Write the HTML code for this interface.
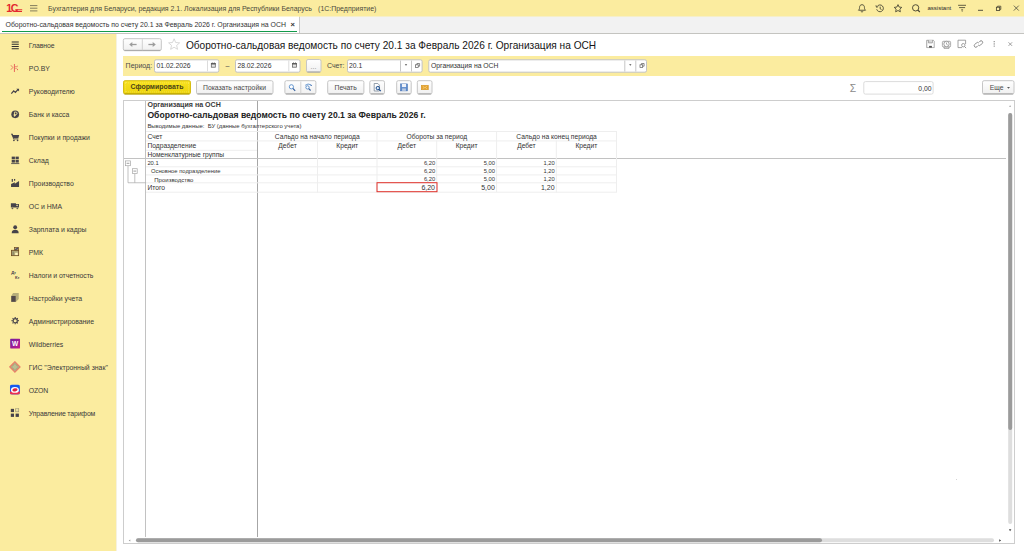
<!DOCTYPE html>
<html lang="ru">
<head>
<meta charset="utf-8">
<title>Оборотно-сальдовая ведомость</title>
<style>
html,body{margin:0;padding:0;}
body{width:1024px;height:551px;position:relative;overflow:hidden;background:#fff;font-family:"Liberation Sans",sans-serif;color:#333;-webkit-font-smoothing:antialiased;}
.abs{position:absolute;}
.t{position:absolute;white-space:pre;line-height:1;}
#titlebar{left:0;top:0;width:1024px;height:16.5px;background:#fbec9f;}
#tabbar{left:0;top:16.5px;width:1024px;height:16.5px;background:#f2f2f2;}
#tab{left:0;top:16.5px;width:299px;height:16.5px;background:#fff;border-right:1px solid #c8c8c8;}
#tabline{left:1.5px;top:30.7px;width:295.6px;height:1.2px;background:#129a4a;}
#tabsep{left:0;top:33px;width:1024px;height:1px;background:#c4c4c0;}
#sidebar{left:0;top:34px;width:116px;height:517px;background:#fbec9f;}
#gap{left:116px;top:34px;width:1px;height:517px;background:#f6f2e0;}
.sb{position:absolute;left:28.8px;font-size:6.9px;line-height:8px;color:#3a3a3a;white-space:pre;}
.ic{position:absolute;}
.btn{position:absolute;box-sizing:border-box;border:1px solid #c3c3c3;border-bottom-color:#a9a9a9;border-radius:2px;background:linear-gradient(#ffffff,#f1f1f1);box-shadow:0 1px 0 rgba(0,0,0,.10);}
.inp{position:absolute;box-sizing:border-box;border:1px solid #c2c2c2;border-radius:2px;background:#fff;}
.lbl{position:absolute;font-size:7px;line-height:8px;color:#4a4a4a;white-space:pre;}
.v{position:absolute;font-size:6.8px;line-height:8px;color:#333;white-space:pre;}
.hl{position:absolute;height:0;border-top:1px solid #eeeeee;}
.vl{position:absolute;width:0;border-left:1px solid #eeeeee;}
.c{position:absolute;font-size:7.6px;line-height:9px;color:#3c3c3c;white-space:pre;}
.num{position:absolute;text-align:right;white-space:pre;color:#333;}
</style>
</head>
<body>
<!-- title bar -->
<div id="titlebar" class="abs"></div>
<div id="tabbar" class="abs"></div>
<div id="tab" class="abs"></div>
<div id="tabline" class="abs"></div>
<div class="abs" style="left:0;top:16px;width:299px;height:1px;background:#fdf5cf;"></div>
<div class="abs" style="left:300px;top:16px;width:724px;height:1px;background:#f6efc9;"></div>
<div id="tabsep" class="abs"></div>
<div id="sidebar" class="abs"></div>
<div id="gap" class="abs"></div>

<div class="t" style="left:48px;top:5.6px;font-size:6.96px;color:#4a4a3c;">Бухгалтерия для Беларуси, редакция 2.1. Локализация для Республики Беларусь   <span style="margin-left:0.5px">(1С:Предприятие)</span></div>
<div class="t" style="left:5.5px;top:22px;font-size:6.93px;color:#333;">Оборотно-сальдовая ведомость по счету 20.1 за Февраль 2026 г. Организация на ОСН</div>
<div class="t" style="left:290.5px;top:21px;font-size:7.5px;color:#333;font-weight:bold;">×</div>
<div class="t" style="left:927.5px;top:5px;font-size:6px;color:#2b2b2b;">assistant</div>

<!-- MAIN -->
<svg class="abs" style="left:0;top:0" width="0" height="0"><defs><linearGradient id="gb" x1="0" y1="0" x2="0" y2="1"><stop offset="0" stop-color="#ffffff"/><stop offset="1" stop-color="#f0f0f0"/></linearGradient><linearGradient id="gy" x1="0" y1="0" x2="0" y2="1"><stop offset="0" stop-color="#f9e21f"/><stop offset="1" stop-color="#ecd30c"/></linearGradient></defs></svg>
<!-- title bar icons -->
<div class="t" style="left:6.2px;top:2.7px;font-size:10.6px;font-weight:bold;color:#e3282f;letter-spacing:-1.4px;">1С</div>
<div class="abs" style="left:15px;top:9px;width:7px;height:0.9px;background:#e3282f;transform:translate(0.2px,0.3px);"></div>
<div class="abs" style="left:14px;top:11px;width:8.3px;height:0.9px;background:#e3282f;"></div>
<svg class="ic" style="left:29px;top:3px" width="10" height="10" viewBox="0 0 10 10"><path d="M1 2.6h7.4M1 5.2h7.4M1 7.9h7.4" stroke="#5c5a48" stroke-width="0.75" fill="none"/></svg>
<!-- bell -->
<svg class="ic" style="left:856px;top:2px" width="12" height="12" viewBox="0 0 12 12"><g transform="translate(6 6.4) scale(0.84) translate(-6 -6)"><path d="M6 1.6c-2 0-2.9 1.5-2.9 3.2c0 2-0.6 2.7-1.3 3.4h8.4c-0.7-0.7-1.3-1.4-1.3-3.4c0-1.700-0.900-3.200-2.900-3.200z" fill="none" stroke="#474432" stroke-width="1.05"/><path d="M5 9.4a1 1 0 0 0 2 0" fill="none" stroke="#474432" stroke-width="1.05"/></g></svg>
<!-- history -->
<svg class="ic" style="left:874px;top:2px" width="12" height="12" viewBox="0 0 12 12"><g transform="translate(6 6.5) scale(0.85) translate(-6 -6)"><path d="M2.600 3.600a4 4 0 1 1-0.500 3.300" fill="none" stroke="#474432" stroke-width="1.05"/><path d="M1.300 2.300l0.500 2.200l2.100-0.600" fill="none" stroke="#474432" stroke-width="1.05"/><path d="M6.200 3.800v2.500l1.600 1" fill="none" stroke="#474432" stroke-width="1.05"/></g></svg>
<!-- star -->
<svg class="ic" style="left:892px;top:2px" width="12" height="12" viewBox="0 0 12 12"><g transform="translate(6 6.4) scale(0.84) translate(-6 -6)"><path d="M6 1.500l1.350 2.900l3.150 0.400l-2.300 2.150l0.600 3.100l-2.800-1.550l-2.800 1.550l0.600-3.100l-2.300-2.150l3.150-0.400z" fill="none" stroke="#474432" stroke-width="1.05" stroke-linejoin="round"/></g></svg>
<!-- search -->
<svg class="ic" style="left:910px;top:2px" width="12" height="12" viewBox="0 0 12 12"><g transform="translate(6 6.2) scale(0.9) translate(-6 -6)"><circle cx="5.600" cy="5.600" r="3.500" fill="none" stroke="#474432" stroke-width="1.05"/><path d="M8.200 8.200l2 2" stroke="#474432" stroke-width="1.3"/></g></svg>
<!-- filter menu -->
<svg class="ic" style="left:956px;top:2px" width="12" height="12" viewBox="0 0 12 12"><path d="M2.100 3.300h7.900M3.100 5.600h6" stroke="#474432" stroke-width="0.85"/><path d="M5.200 7.800h1.900" stroke="#474432" stroke-width="0.8"/><path d="M5.300 8.800h1.700l-0.850 1z" fill="#474432"/></svg>
<!-- min / restore / close -->
<div class="abs" style="left:978px;top:9px;width:5px;height:0.8px;background:#55523f;transform:translate(0px,0.8px);"></div>
<svg class="ic" style="left:992px;top:2px" width="12" height="12" viewBox="0 0 12 12"><rect x="4.400" y="5.200" width="3.300" height="3.300" fill="none" stroke="#474432" stroke-width="0.85"/><path d="M5.600 5.200v-1h3.200v3.200h-1.100" fill="none" stroke="#474432" stroke-width="0.8"/></svg>
<svg class="ic" style="left:1010px;top:2px" width="12" height="12" viewBox="0 0 12 12"><path d="M3.800 3.600l5 5M8.800 3.600l-5 5" stroke="#4a4a40" stroke-width="0.8"/></svg>
<svg class="ic" style="overflow:visible;left:10px;top:40px;transform:translate(0.6px,0.7px);" width="9.2" height="9.2" viewBox="0 0 10 10"><path d="M1.2 1.400h7.700M1.200 3.850h7.700M1.200 6.300h7.700M1.200 8.750h7.700" stroke="#2e2c30" stroke-width="1.150" fill="none"/></svg>
<div class="sb" style="top:42.3px;letter-spacing:-0.07px">Главное</div>
<svg class="ic" style="overflow:visible;left:10px;top:63px;transform:translate(0.6px,0.7px);" width="9.2" height="9.2" viewBox="0 0 10 10"><path d="M4.150 0.300v8.700" stroke="#e2404a" stroke-width="0.850" fill="none"/><path d="M0.400 1.700l2 2.400l-2 2.400" stroke="#e4574f" stroke-width="0.800" fill="none"/><path d="M4.300 3.100h3.500M4.300 5h2.800" stroke="#e66a5c" stroke-width="0.700" fill="none"/><path d="M7.900 1.900l-1.700 1.300" stroke="#ee9a7a" stroke-width="0.600" fill="none"/><circle cx="7.500" cy="6.400" r="0.600" fill="#e2404a"/></svg>
<div class="sb" style="top:65.3px">PO.BY</div>
<svg class="ic" style="overflow:visible;left:10px;top:86px;transform:translate(0.6px,0.7px);" width="9.2" height="9.2" viewBox="0 0 10 10"><path d="M0.8 7.6l2.6-3l1.8 1.6l3-3.2" stroke="#46434a" stroke-width="1.3" fill="none"/><path d="M6.2 2.2h3v3z" fill="#46434a"/></svg>
<div class="sb" style="top:88.3px">Руководителю</div>
<svg class="ic" style="overflow:visible;left:10px;top:109px;transform:translate(0.6px,0.7px);" width="9.2" height="9.2" viewBox="0 0 10 10"><circle cx="5" cy="5" r="4.2" fill="#46434a"/><path d="M4.2 7.6v-5h1.5a1.3 1.3 0 0 1 0 2.7h-2.3M3.4 6.4h2.4" stroke="#fbec9f" stroke-width="0.9" fill="none"/></svg>
<div class="sb" style="top:111.3px">Банк и касса</div>
<svg class="ic" style="overflow:visible;left:10px;top:132px;transform:translate(0.6px,0.7px);" width="9.2" height="9.2" viewBox="0 0 10 10"><path d="M0.3 1.2h1.6l0.5 1.2h7l-1 3.6h-5.4z" fill="#46434a"/><path d="M1.9 1.2l1.3 5.6h5.2" stroke="#46434a" stroke-width="0.8" fill="none"/><circle cx="3.6" cy="8.4" r="0.9" fill="#46434a"/><circle cx="7.6" cy="8.4" r="0.9" fill="#46434a"/></svg>
<div class="sb" style="top:134.3px">Покупки и продажи</div>
<svg class="ic" style="overflow:visible;left:10px;top:155px;transform:translate(0.6px,0.7px);" width="9.2" height="9.2" viewBox="0 0 10 10"><rect x="1.2" y="1" width="3.5" height="2.9" fill="#46434a"/><rect x="5.4" y="1" width="3.5" height="2.9" fill="#46434a"/><rect x="1.2" y="4.6" width="3.5" height="2.9" fill="#46434a"/><rect x="5.4" y="4.6" width="3.5" height="2.9" fill="#46434a"/><rect x="0.6" y="8.2" width="8.9" height="0.9" fill="#46434a"/></svg>
<div class="sb" style="top:157.3px">Склад</div>
<svg class="ic" style="overflow:visible;left:10px;top:178px;transform:translate(0.6px,0.7px);" width="9.2" height="9.2" viewBox="0 0 10 10"><path d="M0.5 8.9V5.9L4.600 3.800V5.400L9.200 2.500V8.900z" fill="#46434a"/><rect x="1.200" y="0.300" width="1.300" height="3.100" fill="#46434a"/><rect x="3.700" y="0.300" width="1.300" height="1.900" fill="#46434a"/></svg>
<div class="sb" style="top:180.3px">Производство</div>
<svg class="ic" style="overflow:visible;left:10px;top:201px;transform:translate(0.6px,0.7px);" width="9.2" height="9.2" viewBox="0 0 10 10"><path d="M0.3 1.6h5.500v0.900h3.300v3.800h-8.800z" fill="#46434a"/><path d="M6.300 3.400h1.500v1.200h-1.500z" fill="#fbec9f"/><circle cx="1.950" cy="7.100" r="1.050" fill="#46434a" stroke="#fbec9f" stroke-width="0.4"/><circle cx="7.300" cy="7.100" r="1.050" fill="#46434a" stroke="#fbec9f" stroke-width="0.4"/></svg>
<div class="sb" style="top:203.3px">ОС и НМА</div>
<svg class="ic" style="overflow:visible;left:10px;top:224px;transform:translate(0.6px,0.7px);" width="9.2" height="9.2" viewBox="0 0 10 10"><circle cx="5" cy="2.8" r="2.1" fill="#46434a"/><path d="M1.2 9.2c0-2.6 1.6-3.6 3.8-3.6s3.8 1 3.8 3.6z" fill="#46434a"/></svg>
<div class="sb" style="top:226.3px">Зарплата и кадры</div>
<svg class="ic" style="overflow:visible;left:10px;top:247px;transform:translate(0.6px,0.7px);" width="9.2" height="9.2" viewBox="0 0 10 10"><rect x="0.950" y="2.850" width="7.800" height="5.800" fill="#b3aa78" stroke="#6e4d26" stroke-width="0.9"/><rect x="4.300" y="-0.100" width="4.300" height="2.700" fill="#aaa37a" stroke="#6e4d26" stroke-width="0.8"/><path d="M5.200 2.300l2.700-2.100" stroke="#3c3a63" stroke-width="1.100"/><rect x="4.950" y="5.500" width="2.850" height="2.500" fill="#fff6bd"/><rect x="2" y="4.300" width="1.600" height="3.700" fill="#8f8a6a"/></svg>
<div class="sb" style="top:249.3px">РМК</div>
<div class="t" style="left:11.2px;top:271.2px;font-size:4.2px;font-weight:bold;color:#46434a;letter-spacing:-0.15px;">Дт</div><div class="t" style="left:15.1px;top:276.0px;font-size:4.2px;font-weight:bold;color:#46434a;letter-spacing:-0.15px;">Кт</div>
<div class="sb" style="top:272.3px;letter-spacing:-0.07px">Налоги и отчетность</div>
<svg class="ic" style="overflow:visible;left:10px;top:293px;transform:translate(0.6px,0.7px);" width="9.2" height="9.2" viewBox="0 0 10 10"><path d="M0.650 2.500L2.640-0.650H8.860V5.900L5.650 8.900V2.500z" fill="#b6ad7a"/><rect x="0.650" y="2.500" width="5" height="6.400" fill="#514949"/></svg>
<div class="sb" style="top:295.3px">Настройки учета</div>
<svg class="ic" style="left:10px;top:316px;transform:translate(0.6px,0.1px);" width="9.2" height="9.2" viewBox="0 0 10 10"><circle cx="5" cy="5" r="2.300" fill="none" stroke="#46434a" stroke-width="1.300"/><path d="M5 1v1.200M5 7.800v1.200M1 5h1.200M7.800 5h1.200M2.170 2.170l0.850 0.850M6.980 6.980l0.850 0.850M7.830 2.170l-0.850 0.850M3.020 6.980l-0.850 0.850" stroke="#46434a" stroke-width="1.250"/></svg>
<div class="sb" style="top:318.3px;letter-spacing:-0.03px">Администрирование</div>
<svg class="ic" style="left:10px;top:338px;transform:translate(0.1px,0.5px);" width="10" height="10.4" viewBox="0 0 10 10.4"><defs><linearGradient id="wbg" x1="0" y1="0" x2="1" y2="1"><stop offset="0" stop-color="#6f1f9e"/><stop offset="1" stop-color="#c4198f"/></linearGradient></defs><rect x="0" y="0" width="10" height="10.400" rx="0.900" fill="url(#wbg)"/><text x="5" y="7.700" font-size="6.600" font-weight="bold" fill="#fff" text-anchor="middle" font-family="Liberation Sans, sans-serif">W</text></svg>
<div class="sb" style="top:341.3px">Wildberries</div>
<svg class="ic" style="left:8px;top:360px;transform:translate(0.9px,0.9px);" width="12" height="12" viewBox="0 0 12 12"><path d="M6 0L12 6L6 12L0 6z" fill="#e8826a"/><path d="M6 1.800L10.200 6L6 10.200L1.800 6z" fill="#a9ae82"/><path d="M6 3.600L8.400 6L6 8.400L3.600 6z" fill="#bfc296"/><path d="M6 1.800V10.200M1.800 6H10.200" stroke="#b9bc90" stroke-width="0.500"/></svg>
<div class="sb" style="top:364.3px">ГИС &quot;Электронный знак&quot;</div>
<svg class="ic" style="left:9px;top:384px;transform:translate(0.9px,0.6px);" width="10.1" height="10.2" viewBox="0 0 10.1 10.2"><rect x="0" y="0" width="10.100" height="10.200" rx="2.200" fill="#1659ee"/><path d="M0 6.800h10.100v1.200a2.200 2.200 0 0 1-2.200 2.200H2.200a2.200 2.200 0 0 1-2.200-2.200z" fill="#ee2f4f"/><ellipse cx="5.050" cy="5.300" rx="4" ry="2.900" fill="#fff"/><ellipse cx="5.100" cy="5.300" rx="2.600" ry="1.600" fill="#e1213f" transform="rotate(-12 5.1 5.3)"/></svg>
<div class="sb" style="top:387.3px;letter-spacing:-0.13px">OZON</div>
<svg class="ic" style="left:10px;top:408px;transform:translate(0.4px,0.3px);" width="9" height="9" viewBox="0 0 9 9"><rect x="0.300" y="0.500" width="3.300" height="3.300" fill="#46434a"/><rect x="5.300" y="0.400" width="3.100" height="3.100" fill="#e9dfa0" stroke="#8d8870" stroke-width="0.600"/><rect x="0.300" y="5.300" width="3.300" height="3.300" fill="#46434a"/><rect x="5.200" y="5.300" width="3.300" height="3.300" fill="#46434a"/></svg>
<div class="sb" style="top:410.3px;letter-spacing:-0.15px">Управление тарифом</div>
<!-- nav buttons -->
<svg class="ic" style="left:121px;top:37px" width="43" height="18" viewBox="0 0 43 18"><rect x="2.3" y="2.7" width="38" height="11.7" rx="1.6" fill="rgba(0,0,0,0.10)"/><rect x="2.3" y="1.7" width="38" height="11.7" rx="1.6" fill="url(#gb)" stroke="#c6c6c6" stroke-width="1"/><path d="M3.4 13.4H39.2" stroke="#a8a8a8" stroke-width="1"/></svg>
<div class="abs" style="left:141px;top:39px;width:1px;height:10.700px;background:#d0d0d0;transform:translate(0.8px,0.2px);"></div>
<svg class="ic" style="left:127px;top:40px" width="12" height="9" viewBox="0 0 12 9"><path d="M3.600 4.500h6" fill="none" stroke="#9c9c9c" stroke-width="1.300"/><path d="M2.200 4.500l3.100-2.400v4.800z" fill="#9c9c9c"/></svg>
<svg class="ic" style="left:146px;top:40px" width="12" height="9" viewBox="0 0 12 9"><path d="M2.400 4.500h6" fill="none" stroke="#9c9c9c" stroke-width="1.300"/><path d="M9.800 4.500l-3.100-2.400v4.800z" fill="#9c9c9c"/></svg>
<svg class="ic" style="left:167px;top:37px;transform:translate(0.1px,0.5px);" width="14" height="14" viewBox="0 0 14 14"><path d="M7 1.300l1.600 3.700l3.900 0.350l-2.950 2.600l0.900 3.850l-3.450-2.050l-3.450 2.050l0.900-3.850l-2.950-2.600l3.900-0.350z" fill="#fff" stroke="#cbcbcb" stroke-width="0.75" stroke-linejoin="miter"/></svg>
<div class="t" style="left:185.900px;top:40.500px;font-size:10.130px;color:#151515;">Оборотно-сальдовая ведомость по счету 20.1 за Февраль 2026 г. Организация на ОСН</div>

<!-- form right icons -->
<svg class="ic" style="left:925px;top:39px;transform:translate(0.8px,0.3px);" width="9.400" height="9.400" viewBox="0 0 10 10"><path d="M1 1h7l1 1v7h-8z" fill="none" stroke="#8a8a8a" stroke-width="0.85"/><path d="M2.800 1v2.800h4.200v-2.800" fill="#efefef" stroke="#8a8a8a" stroke-width="0.8"/><path d="M4 1.200v2.400M5.300 1.200v2.400" stroke="#b0b0b0" stroke-width="0.5"/><rect x="3.500" y="7" width="3" height="1.900" fill="#555"/></svg>
<svg class="ic" style="left:941px;top:39px;transform:translate(0.5px,0px);" width="10" height="10" viewBox="0 0 10 10"><rect x="0.800" y="2.300" width="8.400" height="5.600" rx="1.300" fill="none" stroke="#8a8a8a" stroke-width="0.8"/><circle cx="5" cy="5" r="2.700" fill="#fff" stroke="#8a8a8a" stroke-width="0.8"/><path d="M5 3.500v1.700l1.200 0.600" fill="none" stroke="#8a8a8a" stroke-width="0.7"/><path d="M2.500 7.900v1.400h5v-1.400" fill="none" stroke="#8a8a8a" stroke-width="0.8"/></svg>
<svg class="ic" style="left:957px;top:39px" width="10" height="10" viewBox="0 0 10 10"><path d="M8.600 5v-3.800h-7.600v7.400h4" fill="none" stroke="#8a8a8a" stroke-width="0.8"/><circle cx="6.300" cy="6.200" r="1.700" fill="none" stroke="#8a8a8a" stroke-width="0.8"/><path d="M7.500 7.500l1.600 1.600" stroke="#8a8a8a" stroke-width="0.9"/></svg>
<svg class="ic" style="left:973px;top:39px" width="11" height="10" viewBox="0 0 11 10"><g fill="none" stroke="#858585" stroke-width="0.95"><path d="M5 6.700l-1.100 1.100a1.550 1.550 0 0 1-2.200-2.200l1.700-1.700a1.550 1.550 0 0 1 2.200 0"/><path d="M5.900 3.300l1.100-1.100a1.550 1.550 0 0 1 2.200 2.200l-1.700 1.700a1.550 1.550 0 0 1-2.200 0"/></g></svg>
<svg class="ic" style="left:989px;top:39px;transform:translate(0.5px,0px);" width="10" height="10" viewBox="0 0 10 10"><circle cx="4.700" cy="2.700" r="0.650" fill="#7a7a7a"/><circle cx="4.700" cy="4.900" r="0.650" fill="#7a7a7a"/><circle cx="4.700" cy="7.100" r="0.650" fill="#7a7a7a"/></svg>
<svg class="ic" style="left:1005px;top:39px;transform:translate(0.5px,0px);" width="10" height="10" viewBox="0 0 10 10"><path d="M3 3.300l3.600 3.600M6.600 3.300l-3.600 3.600" stroke="#8a8a8a" stroke-width="0.8"/></svg>

<!-- yellow band -->
<div class="abs" style="left:123px;top:56px;width:891.700px;height:20px;background:#fbec9f;"></div>
<div class="lbl" style="left:125.600px;top:62px;">Период:</div>
<svg class="ic" style="left:153px;top:58px" width="70" height="19" viewBox="0 0 70 19"><rect x="1.5" y="1.8" width="64.3" height="12.4" rx="1.6" fill="#fff" stroke="#c2c2c2" stroke-width="1"/></svg>
<div class="abs" style="left:207px;top:60px;width:0;height:11.400px;border-left:1px solid #dcdcdc;transform:translate(0px,0.3px);"></div>
<div class="v" style="left:156.600px;top:62px;">01.02.2026</div>
<svg class="ic" style="left:209px;top:61px;transform:translate(0.3px,0.2px);" width="8" height="8" viewBox="0 0 8 8"><rect x="2" y="2.200" width="4" height="3.800" fill="#e4e4e4" stroke="#606060" stroke-width="0.75"/><rect x="1.700" y="1.900" width="4.600" height="1.400" fill="#5a5a5a"/><path d="M3 1.200v1M5 1.200v1" stroke="#5a5a5a" stroke-width="0.7"/></svg>
<div class="lbl" style="left:225.500px;top:62px;">–</div>
<svg class="ic" style="left:234px;top:58px" width="70" height="19" viewBox="0 0 70 19"><rect x="1.5" y="1.8" width="64.5" height="12.4" rx="1.6" fill="#fff" stroke="#c2c2c2" stroke-width="1"/></svg>
<div class="abs" style="left:288px;top:60px;width:0;height:11.400px;border-left:1px solid #dcdcdc;transform:translate(0.3px,0.3px);"></div>
<div class="v" style="left:237.400px;top:62px;">28.02.2026</div>
<svg class="ic" style="left:290px;top:61px;transform:translate(0.5px,0.2px);" width="8" height="8" viewBox="0 0 8 8"><rect x="2" y="2.200" width="4" height="3.800" fill="#e4e4e4" stroke="#606060" stroke-width="0.75"/><rect x="1.700" y="1.900" width="4.600" height="1.400" fill="#5a5a5a"/><path d="M3 1.200v1M5 1.200v1" stroke="#5a5a5a" stroke-width="0.7"/></svg>
<svg class="ic" style="left:305px;top:58px" width="20" height="19" viewBox="0 0 20 19"><rect x="1.5" y="2.5" width="14.5" height="12.5" rx="1.6" fill="rgba(0,0,0,0.10)"/><rect x="1.5" y="1.5" width="14.5" height="12.5" rx="1.6" fill="url(#gb)" stroke="#c6c6c6" stroke-width="1"/><path d="M2.6 14H14.9" stroke="#a8a8a8" stroke-width="1"/></svg>
<div class="lbl" style="left:310.500px;top:63.400px;color:#8a8a8a;">...</div>
<div class="lbl" style="left:327px;top:62px;">Счет:</div>
<svg class="ic" style="left:346px;top:58px" width="80" height="19" viewBox="0 0 80 19"><rect x="1.5" y="1.8" width="74.6" height="12.4" rx="1.6" fill="#fff" stroke="#c2c2c2" stroke-width="1"/></svg>
<div class="abs" style="left:400px;top:60px;width:0;height:11px;border-left:1px solid #c6c6c6;transform:translate(0px,0.5px);"></div>
<div class="abs" style="left:411px;top:60px;width:0;height:11px;border-left:1px solid #c6c6c6;transform:translate(0px,0.5px);"></div>
<div class="v" style="left:349px;top:62px;">20.1</div>
<svg class="ic" style="left:403px;top:62px;transform:translate(0px,0.1px);" width="6" height="6" viewBox="0 0 6 6"><path d="M1.800 2.200h2.400l-1.200 1.500z" fill="#4a4a4a"/></svg>
<svg class="ic" style="left:413px;top:62px" width="8" height="8" viewBox="0 0 8 8"><rect x="2.500" y="2.800" width="2.700" height="2.700" fill="none" stroke="#5c5c5c" stroke-width="0.7"/><path d="M3.900 2.800v-1.300h2.700v2.700h-1.400" fill="none" stroke="#5c5c5c" stroke-width="0.7"/></svg>
<svg class="ic" style="left:427px;top:58px" width="223" height="19" viewBox="0 0 223 19"><rect x="1.8" y="1.8" width="217.7" height="12.4" rx="1.6" fill="#fff" stroke="#c2c2c2" stroke-width="1"/></svg>
<div class="abs" style="left:624px;top:60px;width:0;height:11px;border-left:1px solid #c6c6c6;transform:translate(0.3px,0.5px);"></div>
<div class="abs" style="left:635px;top:60px;width:0;height:11px;border-left:1px solid #c6c6c6;transform:translate(0.3px,0.5px);"></div>
<div class="v" style="left:431px;top:62px;">Организация на ОСН</div>
<svg class="ic" style="left:627px;top:62px;transform:translate(0.3px,0.1px);" width="6" height="6" viewBox="0 0 6 6"><path d="M1.800 2.200h2.400l-1.200 1.500z" fill="#4a4a4a"/></svg>
<svg class="ic" style="left:637px;top:62px;transform:translate(0.5px,0px);" width="8" height="8" viewBox="0 0 8 8"><rect x="2.500" y="2.800" width="2.700" height="2.700" fill="none" stroke="#5c5c5c" stroke-width="0.7"/><path d="M3.900 2.800v-1.300h2.700v2.700h-1.400" fill="none" stroke="#5c5c5c" stroke-width="0.7"/></svg>

<!-- command bar -->
<svg class="ic" style="left:122px;top:79px" width="72" height="20" viewBox="0 0 72 20"><rect x="1.5" y="2.7" width="67" height="13.2" rx="1.6" fill="rgba(0,0,0,0.10)"/><rect x="1.5" y="1.7" width="67" height="13.2" rx="1.6" fill="url(#gy)" stroke="#d6bd12" stroke-width="1"/><path d="M2.6 14.9H67.4" stroke="#b59f00" stroke-width="1"/></svg><div class="abs" style="left:125px;top:82px;width:64px;height:10px;box-sizing:border-box;border:1px dotted rgba(255,255,255,0.2);transform:translate(0px,0.4px);"></div>
<div class="t" style="left:130.600px;top:83.500px;font-size:6.95px;font-weight:bold;color:#4a4419;">Сформировать</div>
<svg class="ic" style="left:195px;top:79px" width="82" height="20" viewBox="0 0 82 20"><rect x="1.5" y="2.7" width="76.5" height="13.2" rx="1.6" fill="rgba(0,0,0,0.10)"/><rect x="1.5" y="1.7" width="76.5" height="13.2" rx="1.6" fill="url(#gb)" stroke="#c6c6c6" stroke-width="1"/><path d="M2.6 14.9H76.9" stroke="#a8a8a8" stroke-width="1"/></svg>
<div class="lbl" style="left:203px;top:83.500px;font-size:6.800px;">Показать настройки</div>
<svg class="ic" style="left:283px;top:79px" width="36" height="20" viewBox="0 0 36 20"><rect x="1.9" y="2.7" width="31" height="13.2" rx="1.6" fill="rgba(0,0,0,0.10)"/><rect x="1.9" y="1.7" width="31" height="13.2" rx="1.6" fill="url(#gb)" stroke="#c6c6c6" stroke-width="1"/><path d="M3 14.9H31.8" stroke="#a8a8a8" stroke-width="1"/></svg>
<div class="abs" style="left:300px;top:81px;width:1px;height:12px;background:#d0d0d0;transform:translate(0.3px,0.5px);"></div>
<svg class="ic" style="left:286px;top:83px;transform:translate(0.9px,0px);" width="10" height="10" viewBox="0 0 10 10"><circle cx="4.500" cy="3.800" r="2.100" fill="#fff" stroke="#548bc9" stroke-width="0.9"/><path d="M6.100 5.500l2.200 2.300" stroke="#35609c" stroke-width="1.100"/></svg>
<svg class="ic" style="left:303px;top:82px;transform:translate(0.5px,0.5px);" width="10" height="10" viewBox="0 0 10 10"><path d="M1.700 2.800Q4.500 0.500 7.500 2.300" fill="none" stroke="#5b8fcb" stroke-width="0.9"/><circle cx="7.700" cy="2.900" r="0.700" fill="#3f6fb0"/><circle cx="4" cy="4.900" r="1.650" fill="#fff" stroke="#4f86c6" stroke-width="0.9"/><path d="M5.200 6.100l1.900 1.900" stroke="#35609c" stroke-width="1.100"/></svg>
<svg class="ic" style="left:326px;top:79px" width="42" height="20" viewBox="0 0 42 20"><rect x="1.7" y="2.7" width="36.2" height="13.2" rx="1.6" fill="rgba(0,0,0,0.10)"/><rect x="1.7" y="1.7" width="36.2" height="13.2" rx="1.6" fill="url(#gb)" stroke="#c6c6c6" stroke-width="1"/><path d="M2.8 14.9H36.8" stroke="#a8a8a8" stroke-width="1"/></svg>
<div class="lbl" style="left:334.500px;top:83.500px;font-size:6.800px;">Печать</div>
<svg class="ic" style="left:368px;top:79px" width="20" height="20" viewBox="0 0 20 20"><rect x="1.8" y="2.7" width="14.7" height="13.2" rx="1.6" fill="rgba(0,0,0,0.10)"/><rect x="1.8" y="1.7" width="14.7" height="13.2" rx="1.6" fill="url(#gb)" stroke="#c6c6c6" stroke-width="1"/><path d="M2.9 14.9H15.4" stroke="#a8a8a8" stroke-width="1"/></svg>
<svg class="ic" style="left:372px;top:82px;transform:translate(0.2px,0.5px);" width="10" height="10" viewBox="0 0 10 10"><path d="M2 1h3.600l1.600 1.600v5.900h-5.200z" fill="#fff" stroke="#6a7a8a" stroke-width="0.7"/><circle cx="5.600" cy="5.600" r="1.700" fill="#dfeaf7" stroke="#1f4f8f" stroke-width="1"/><path d="M6.900 6.900l1.700 1.700" stroke="#1f4f8f" stroke-width="1.200"/></svg>
<svg class="ic" style="left:395px;top:79px" width="20" height="20" viewBox="0 0 20 20"><rect x="1.7" y="2.7" width="14.5" height="13.2" rx="1.6" fill="rgba(0,0,0,0.10)"/><rect x="1.7" y="1.7" width="14.5" height="13.2" rx="1.6" fill="url(#gb)" stroke="#c6c6c6" stroke-width="1"/><path d="M2.8 14.9H15.1" stroke="#a8a8a8" stroke-width="1"/></svg>
<svg class="ic" style="left:399px;top:82px;transform:translate(0px,0.5px);" width="10" height="10" viewBox="0 0 10 10"><rect x="1.500" y="1.400" width="7" height="7" fill="#5b8acb" stroke="#3d6cb0" stroke-width="0.5"/><rect x="2.900" y="1.500" width="4.200" height="3.100" fill="#eef2f9"/><rect x="3.100" y="5.900" width="3.800" height="2.500" fill="#b9c9e2"/></svg>
<svg class="ic" style="left:415px;top:79px" width="20" height="20" viewBox="0 0 20 20"><rect x="2.3" y="2.7" width="14.7" height="13.2" rx="1.6" fill="rgba(0,0,0,0.10)"/><rect x="2.3" y="1.7" width="14.7" height="13.2" rx="1.6" fill="url(#gb)" stroke="#c6c6c6" stroke-width="1"/><path d="M3.4 14.9H15.9" stroke="#a8a8a8" stroke-width="1"/></svg>
<svg class="ic" style="left:419px;top:82px;transform:translate(0.7px,0.5px);" width="10" height="10" viewBox="0 0 10 10"><rect x="1.550" y="2.750" width="7.100" height="4.500" fill="#e6a32c" stroke="#cf9020" stroke-width="0.5"/><path d="M3 3.800l2.100 1.500l2.100-1.500M3 6.300l1.400-1.100M7.200 6.300l-1.400-1.100" fill="none" stroke="#f7dc9c" stroke-width="0.6"/></svg>

<div class="t" style="left:849.800px;top:84.400px;font-size:10.400px;color:#8a8a8a;">Σ</div>
<svg class="ic" style="left:862px;top:80px" width="75" height="19" viewBox="0 0 75 19"><rect x="1.8" y="1.6" width="69.3" height="12.5" rx="1.6" fill="#fff" stroke="#dcdcdc" stroke-width="1"/></svg>
<div class="v" style="left:900px;top:84.600px;width:31.600px;text-align:right;">0,00</div>
<svg class="ic" style="left:981px;top:79px" width="37" height="20" viewBox="0 0 37 20"><rect x="1.5" y="2.7" width="31.5" height="13.2" rx="1.6" fill="rgba(0,0,0,0.10)"/><rect x="1.5" y="1.7" width="31.5" height="13.2" rx="1.6" fill="url(#gb)" stroke="#c6c6c6" stroke-width="1"/><path d="M2.6 14.9H31.9" stroke="#a8a8a8" stroke-width="1"/></svg>
<div class="lbl" style="left:989.700px;top:83.500px;font-size:6.800px;">Еще</div>
<svg class="ic" style="left:1005px;top:85px;transform:translate(0.5px,0px);" width="6" height="6" viewBox="0 0 6 6"><path d="M1.500 2h3l-1.500 1.800z" fill="#555"/></svg>
<div class="abs" style="left:123px;top:100px;width:891.8px;height:444.2px;box-sizing:border-box;border:1px solid #cdcdcd;background:#fff;"></div>
<div class="abs" style="left:145px;top:101px;width:1px;height:435.5px;background:#c2c2c2;"></div>
<div class="abs" style="left:257px;top:101px;width:1px;height:435.5px;background:#a6a6a6;"></div>
<div class="t" style="left:147.4px;top:102.3px;font-size:7.08px;font-weight:bold;color:#3a3a3a;">Организация на ОСН</div>
<div class="t" style="left:147.4px;top:110.6px;font-size:8.6px;font-weight:bold;color:#222;">Оборотно-сальдовая ведомость по счету 20.1 за Февраль 2026 г.</div>
<div class="t" style="left:147.4px;top:123.6px;font-size:5.93px;color:#333;">Выводимые данные:  БУ (данные бухгалтерского учета)</div>
<div class="hl" style="left:146px;top:131px;width:470.5px;"></div>
<div class="hl" style="left:146px;top:140px;width:470.5px;transform:translate(0px,0.4px);"></div>
<div class="hl" style="left:146px;top:149px;width:111px;transform:translate(0px,0.8px);"></div>
<div class="hl" style="left:146px;top:166px;width:470.5px;transform:translate(0px,0.3px);"></div>
<div class="hl" style="left:146px;top:174px;width:470.5px;transform:translate(0px,0.4px);"></div>
<div class="hl" style="left:146px;top:182px;width:470.5px;transform:translate(0px,0.3px);"></div>
<div class="hl" style="left:146px;top:191px;width:470.5px;transform:translate(0px,0.7px);"></div>
<div class="abs" style="left:124px;top:158px;width:882px;height:1px;background:#c2c2c2;"></div>
<div class="vl" style="left:317px;top:140px;height:51.5px;transform:translate(0px,0.5px);"></div>
<div class="vl" style="left:436px;top:140px;height:51.5px;transform:translate(0.2px,0.5px);"></div>
<div class="vl" style="left:555px;top:140px;height:51.5px;transform:translate(0.8px,0.5px);"></div>
<div class="vl" style="left:376px;top:131px;height:61px;transform:translate(0.5px,0px);"></div>
<div class="vl" style="left:496px;top:131px;height:61px;transform:translate(0.1px,0px);"></div>
<div class="vl" style="left:616.0px;top:131px;height:61px;"></div>
<div class="t" style="left:147.4px;top:134px;font-size:6.7px;color:#333;">Счет</div>
<div class="t" style="left:147.4px;top:143.3px;font-size:6.7px;color:#333;">Подразделение</div>
<div class="t" style="left:147.4px;top:151.6px;font-size:6.7px;color:#333;">Номенклатурные группы</div>
<div class="t" style="left:257.5px;width:119.5px;text-align:center;top:134px;font-size:6.7px;color:#333;">Сальдо на начало периода</div>
<div class="t" style="left:377px;width:119.60000000000002px;text-align:center;top:134px;font-size:6.7px;color:#333;">Обороты за период</div>
<div class="t" style="left:496.6px;width:119.89999999999998px;text-align:center;top:134px;font-size:6.7px;color:#333;">Сальдо на конец периода</div>
<div class="t" style="left:257.5px;width:60.0px;text-align:center;top:142.9px;font-size:6.7px;color:#333;">Дебет</div>
<div class="t" style="left:317.5px;width:59.5px;text-align:center;top:142.9px;font-size:6.7px;color:#333;">Кредит</div>
<div class="t" style="left:377px;width:59.69999999999999px;text-align:center;top:142.9px;font-size:6.7px;color:#333;">Дебет</div>
<div class="t" style="left:436.7px;width:59.900000000000034px;text-align:center;top:142.9px;font-size:6.7px;color:#333;">Кредит</div>
<div class="t" style="left:496.6px;width:59.69999999999993px;text-align:center;top:142.9px;font-size:6.7px;color:#333;">Дебет</div>
<div class="t" style="left:556.3px;width:60.200000000000045px;text-align:center;top:142.9px;font-size:6.7px;color:#333;">Кредит</div>
<div class="t" style="left:147.4px;top:161px;font-size:5.8px;color:#333;">20.1</div>
<div class="t" style="left:151px;top:168.9px;font-size:5.8px;color:#333;">Основное подразделение</div>
<div class="t" style="left:154.3px;top:176.8px;font-size:6px;color:#333;">Производство</div>
<div class="t" style="left:147.4px;top:184.5px;font-size:6.7px;color:#333;">Итого</div>
<div class="t" style="left:395.2px;width:40px;text-align:right;top:161px;font-size:5.8px;color:#333;">6,20</div>
<div class="t" style="left:455.0px;width:40px;text-align:right;top:161px;font-size:5.8px;color:#333;">5,00</div>
<div class="t" style="left:514.8px;width:40px;text-align:right;top:161px;font-size:5.8px;color:#333;">1,20</div>
<div class="t" style="left:395.2px;width:40px;text-align:right;top:168.9px;font-size:5.8px;color:#333;">6,20</div>
<div class="t" style="left:455.0px;width:40px;text-align:right;top:168.9px;font-size:5.8px;color:#333;">5,00</div>
<div class="t" style="left:514.8px;width:40px;text-align:right;top:168.9px;font-size:5.8px;color:#333;">1,20</div>
<div class="t" style="left:395.2px;width:40px;text-align:right;top:176.8px;font-size:5.8px;color:#333;">6,20</div>
<div class="t" style="left:455.0px;width:40px;text-align:right;top:176.8px;font-size:5.8px;color:#333;">5,00</div>
<div class="t" style="left:514.8px;width:40px;text-align:right;top:176.8px;font-size:5.8px;color:#333;">1,20</div>
<div class="t" style="left:395.0px;width:40px;text-align:right;top:184.2px;font-size:7px;color:#333;">6,20</div>
<div class="t" style="left:454.8px;width:40px;text-align:right;top:184.2px;font-size:7px;color:#333;">5,00</div>
<div class="t" style="left:514.6px;width:40px;text-align:right;top:184.2px;font-size:7px;color:#333;">1,20</div>
<div class="abs" style="left:376px;top:182px;width:60.6px;height:10.2px;box-sizing:border-box;border:1px solid #e0302a;transform:translate(0.5px,0.2px);"></div>
<svg class="ic" style="left:123px;top:158px" width="24" height="28" viewBox="0 0 24 28"><g fill="none" stroke="#a6a6a6" stroke-width="0.7"><path d="M5 8v16.750h17.600"/><path d="M11.800 15.800v8.950"/><rect x="2.600" y="2.900" width="4.800" height="4.800" fill="#fff"/><rect x="9.400" y="10.700" width="4.800" height="4.800" fill="#fff"/><path d="M3.600 5.300h2.800M10.400 13.100h2.800" stroke="#777"/></g></svg>
<div class="abs" style="left:136px;top:538px;width:858px;height:4px;border-radius:2px;background:#dedede;transform:translate(0px,0.3px);"></div>
<div class="abs" style="left:136px;top:538px;width:686px;height:4px;border-radius:2px;background:#9b9b9b;transform:translate(0px,0.3px);"></div>
<svg class="ic" style="left:127px;top:538px" width="5" height="5" viewBox="0 0 5 5"><path d="M3.300 1.400v2.200l-1.600-1.100z" fill="#9a9a9a"/></svg>
<svg class="ic" style="left:997px;top:538px;transform:translate(0.5px,0px);" width="5" height="5" viewBox="0 0 5 5"><path d="M1.700 1.200v2.600l2-1.300z" fill="#444"/></svg>
<div class="abs" style="left:1008px;top:113px;width:3.8px;height:411px;border-radius:2px;background:#dedede;transform:translate(0.2px,0px);"></div>
<div class="abs" style="left:1008px;top:113px;width:3.8px;height:316.5px;border-radius:2px;background:#9b9b9b;transform:translate(0.2px,0px);"></div>
<svg class="ic" style="left:1007px;top:103px;transform:translate(0.6px,0.5px);" width="5" height="5" viewBox="0 0 5 5"><path d="M1.400 3.300h2.200l-1.100-1.600z" fill="#9a9a9a"/></svg>
<svg class="ic" style="left:1007px;top:527px;transform:translate(0.6px,0.5px);" width="5" height="5" viewBox="0 0 5 5"><path d="M1.200 1.700h2.600l-1.300 2z" fill="#444"/></svg>
<div class="abs" style="left:956px;top:479px;width:1px;height:1px;background:#d4d4d4;"></div>

</body>
</html>
